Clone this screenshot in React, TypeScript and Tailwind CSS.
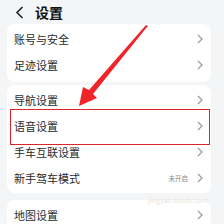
import React from 'react'

const font = { fontFamily: '"Noto Sans CJK SC", "Noto Sans", sans-serif' }

function Chevron() {
  return (
    <svg width="6" height="10" viewBox="0 0 6 10" className="shrink-0">
      <path d="M1 1l4 4-4 4" fill="none" stroke="#9a9a9a" strokeWidth="1.2" />
    </svg>
  )
}

function Row({ label, value, boxed }: { label: string; value?: string; boxed?: boolean }) {
  return (
    <div className="relative h-[26px] flex items-center pl-[7px] pr-[8px]">
      {boxed && <div className="absolute left-[3px] right-[1px] top-[-4px] bottom-[-6px] border-[1.5px] border-[#d9262a]" />}
      <span className="text-[11px] text-[#2a2a2a] leading-none">{label}</span>
      <div className="ml-auto flex items-center gap-[9px]">
        {value && <span className="text-[6.5px] text-[#8a8a8a] leading-none">{value}</span>}
        <Chevron />
      </div>
    </div>
  )
}

export default function App() {
  return (
    <div className="w-[224px] h-[224px] bg-[#f4f5f7] overflow-hidden relative" style={font}>
      {/* Header */}
      <div className="h-[24px] flex items-center pl-[15px] gap-[11px]">
        <svg width="9" height="13" viewBox="0 0 9 13">
          <path d="M7.5 1L2 6.5 7.5 12" fill="none" stroke="#222" strokeWidth="1.6" />
        </svg>
        <span className="text-[14px] font-bold text-[#111] leading-none">设置</span>
      </div>

      <div className="flex flex-col gap-[3px] pl-[7px] pr-[13px]">
        <div className="bg-white rounded-[8px] pt-[2px] pb-[4px]">
          <Row label="账号与安全" />
          <Row label="足迹设置" />
        </div>
        <div className="bg-white rounded-[8px] py-[2px]">
          <Row label="导航设置" />
          <Row label="语音设置" boxed />
          <Row label="手车互联设置" />
          <Row label="新手驾车模式" value="未开启" />
        </div>
        <div className="bg-white rounded-[8px] mt-[4px] pt-[2px]">
          <Row label="地图设置" />
        </div>
      </div>

      {/* Arrow */}
      <svg className="absolute left-0 top-0" width="224" height="224" viewBox="0 0 224 224">
        <path d="M148 26 L147 27 L93 94 L97 98 L79 106 L83 87 L89 90 L146 25 Z" fill="#f0242a" />
      </svg>

      {/* Watermark */}
      <div className="absolute left-[148px] top-[197px] text-[7px] text-[#e4e4e4] leading-none">jingyan.baidu.com</div>
    </div>
  )
}
